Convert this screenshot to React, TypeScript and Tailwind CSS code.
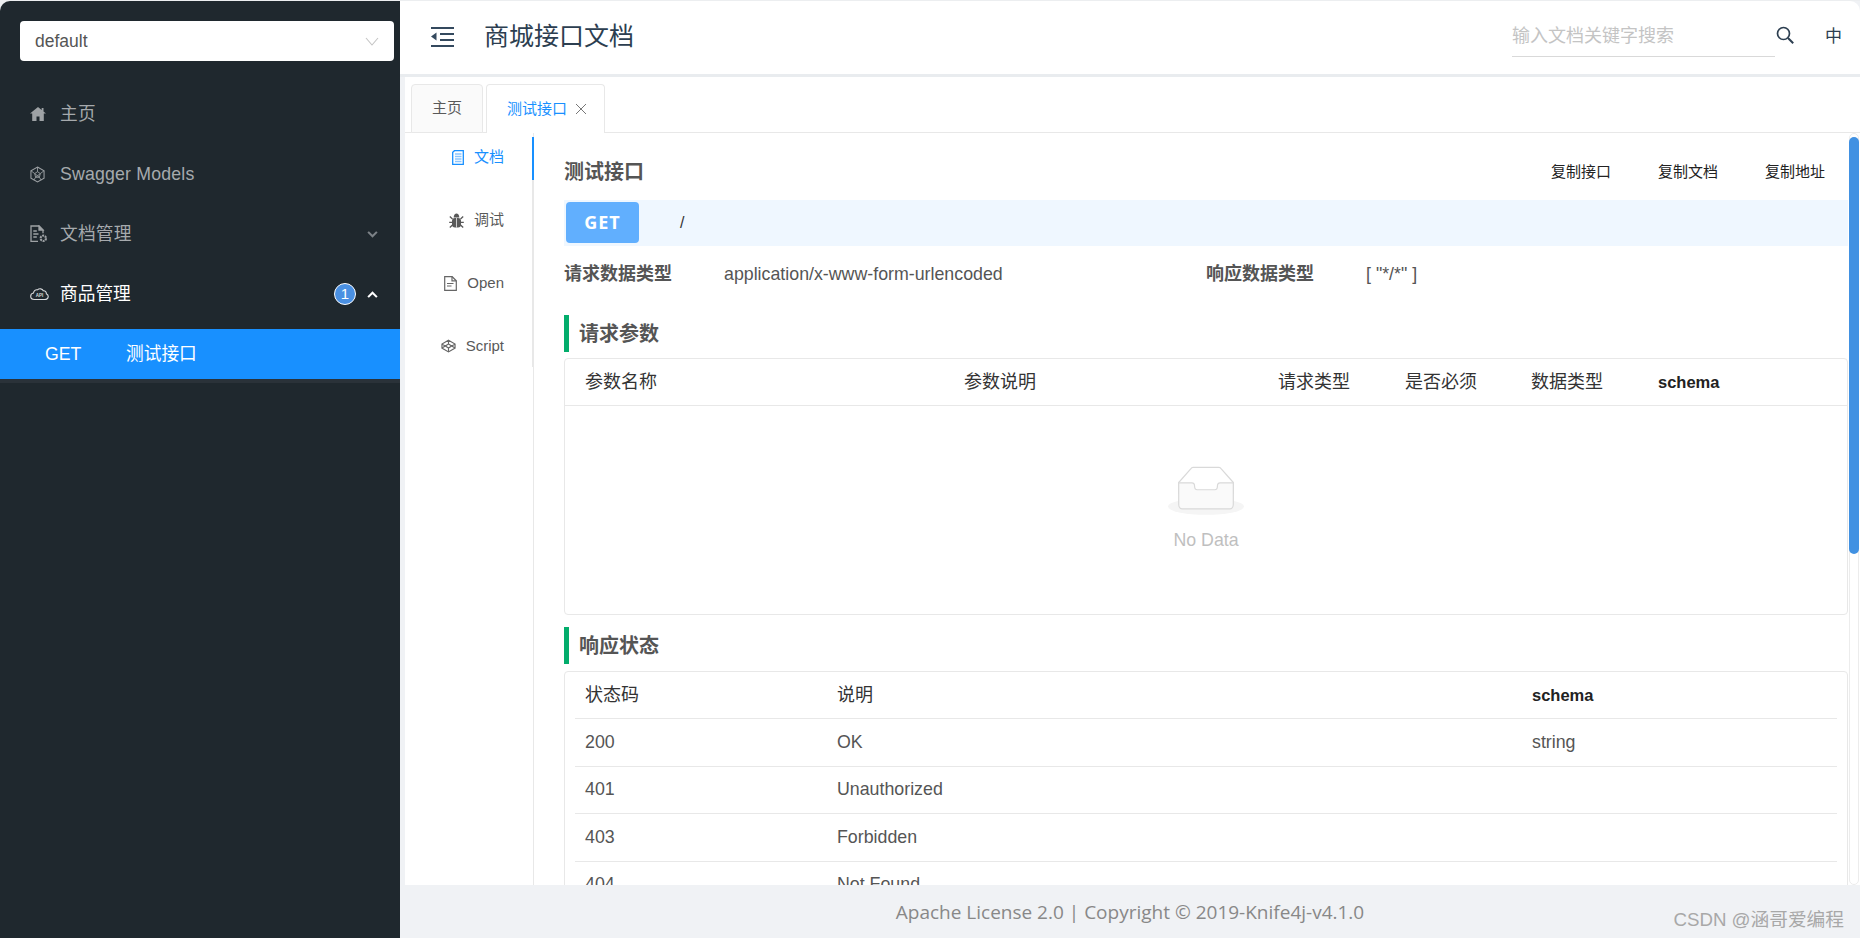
const font = "font-['Liberation_Sans','Noto_Sans_CJK_SC',sans-serif]";

function HomeIcon() {
  return (
    <svg viewBox="0 0 16 14" className="w-[16px] h-[14px]" fill="#9ea2a5">
      <path d="M8 0 0 6.600h2.200V14h4.300V9.600h3V14h4.300V6.600H16l-2.500-2.100V1h-1.800v2L8 0z" />
    </svg>
  );
}

function ModelsIcon() {
  return (
    <svg viewBox="0 0 16 18" className="w-[15px] h-[17px]" fill="none" stroke="#9ea2a5" strokeWidth="1.100">
      <path d="M8 1 15 5v8l-7 4-7-4V5z" />
      <path d="M8 1v5M1 5l4 3M15 5l-4 3M5 8l3-2 3 2-1 4H6zM6 12l-2 3M10 12l2 3M5 8l5 4M11 8l-5 4" strokeWidth="0.900" />
    </svg>
  );
}

function FileGearIcon() {
  return (
    <svg viewBox="0 0 18 18" className="w-[18px] h-[18px]" fill="none" stroke="#9ea2a5" strokeWidth="1.300">
      <path d="M8 16.400H1V1h8l4 4v3.200" />
      <path d="M9 1v4h4z" fill="#9ea2a5" />
      <path d="M3.300 6h3.500M3.300 9h5.200M3.300 12h3.500" />
      <circle cx="13.300" cy="13.300" r="2.700" strokeWidth="2.100" strokeDasharray="2 0.800" />
    </svg>
  );
}

function CloudIcon() {
  return (
    <svg viewBox="0 0 19 13" className="w-[19px] h-[13px]" fill="none" stroke="#d8dadc" strokeWidth="1.100">
      <path d="M4.500 11.500C2 11.500.7 10 .7 8.200c0-1.700 1.200-3 2.800-3.200C3.800 2.800 5.500 1.400 7.500 1.800 9.300.2 12.300.5 13.300 2.800c1.900-.3 3.300 1.200 3 3 1.300.6 2 1.700 1.900 2.800-.1 1.700-1.500 2.900-3.700 2.900z" />
      <text x="9.500" y="9.400" textAnchor="middle" fontSize="4.500" fontWeight="700" fill="#d8dadc" stroke="none">API</text>
    </svg>
  );
}

function SearchIcon() {
  return (
    <svg viewBox="0 0 18 18" className="w-[18px] h-[18px]" fill="none" stroke="#2c3e50" strokeWidth="1.700">
      <circle cx="7.500" cy="7.500" r="6" />
      <path d="m12 12 5.200 5.200" strokeWidth="2" />
    </svg>
  );
}

function Toggler() {
  return (
    <svg viewBox="0 0 23 20" className="w-[23px] h-[20px]" fill="#34495e">
      <rect x="0" y="0" width="23" height="2" />
      <rect x="9" y="6" width="14" height="2" />
      <rect x="9" y="12" width="14" height="2" />
      <rect x="0" y="18" width="23" height="2" />
      <path d="M0 9.500 5.500 5.500v8z" />
    </svg>
  );
}

function DocIcon() {
  return (
    <svg viewBox="0 0 12 15" className="w-[12px] h-[15px]" fill="none" stroke="#1890ff" strokeWidth="1.300">
      <path d="M2.500.7h8.800v13.600H.7V2.400z" />
      <path d="M3 4h6.500M3 6.500h6.500M3 9h6.500M3 11.500h6.500" stroke="#8cc6ff" strokeWidth="1.300" />
    </svg>
  );
}

function BugIcon() {
  return (
    <svg viewBox="0 0 15 15" className="w-[15px] h-[15px]" fill="#595959" stroke="#595959">
      <path d="M4.700 4.500c0-5.200 5.600-5.200 5.600 0z" stroke="none" />
      <rect x="3" y="5" width="9" height="9.500" rx="3" stroke="none" />
      <path d="M.8 3.500 3.500 6M14.200 3.500 11.500 6M.2 9.300h3M14.800 9.300h-3M.8 14.500 4 11.500M14.200 14.500 11 11.500" strokeWidth="1.300" fill="none" />
      <path d="M7.500 5v9.500" stroke="#fff" strokeWidth="0.700" />
    </svg>
  );
}

function FileIcon() {
  return (
    <svg viewBox="0 0 13 15" className="w-[13px] h-[15px]" fill="none" stroke="#666" strokeWidth="1.200">
      <path d="M.7.700h7.500l4.100 4v9.600H.7z" />
      <path d="M8 .700v4.200h4.200" />
      <path d="M3 7.500h6.500M3 10h4.500" strokeWidth="1.100" />
    </svg>
  );
}

function CodepenIcon() {
  return (
    <svg viewBox="0 0 16 14" className="w-[15px] h-[14px]" fill="none" stroke="#666" strokeWidth="1.200">
      <path d="M8 .8 15 5v4.200L8 13.300 1 9.200V5zM8 .8v4l-3.400 2.200L1 5M8 .8v4l3.400 2.200L15 5M1 9.200 4.600 7 8 9.200l3.400-2.200L15 9.200M8 9.200v4.100" />
    </svg>
  );
}

function EmptyIcon() {
  return (
    <svg viewBox="0 0 64 41" className="w-[76px] h-[49px]">
      <g transform="translate(0 1)" fill="none" fillRule="evenodd">
        <ellipse fill="#f5f5f5" cx="32" cy="33" rx="32" ry="7" />
        <g fillRule="nonzero" stroke="#d9d9d9">
          <path d="M55 12.760 44.854 1.258C44.367.474 43.656 0 42.907 0H21.093c-.749 0-1.460.474-1.947 1.257L9 12.761V22h46v-9.240z" />
          <path d="M41.613 15.931c0-1.605.994-2.930 2.227-2.931H55v18.137C55 33.260 53.680 35 52.050 35h-40.100C10.320 35 9 33.259 9 31.137V13h11.160c1.233 0 2.227 1.323 2.227 2.928v.022c0 1.605 1.005 2.901 2.237 2.901h14.752c1.232 0 2.237-1.308 2.237-2.913v-.007z" fill="#fafafa" />
        </g>
      </g>
    </svg>
  );
}

const menus = [
  { label: "主页", icon: <HomeIcon /> },
  { label: "Swagger Models", icon: <ModelsIcon /> },
  { label: "文档管理", icon: <FileGearIcon />, chevron: "down" },
];

const sideTabs = [
  { label: "文档", icon: <DocIcon />, active: true },
  { label: "调试", icon: <BugIcon /> },
  { label: "Open", icon: <FileIcon /> },
  { label: "Script", icon: <CodepenIcon /> },
];

const statusRows = [
  { code: "200", desc: "OK", schema: "string" },
  { code: "401", desc: "Unauthorized", schema: "" },
  { code: "403", desc: "Forbidden", schema: "" },
  { code: "404", desc: "Not Found", schema: "" },
];

function Sidebar() {
  return (
    <aside className="w-[400px] shrink-0 bg-[#1f282e] rounded-tl-[10px] pt-[20px]">
      <div className="mx-[20px] w-[374px] h-[40px] bg-white rounded-[4px] flex items-center justify-between pl-[15px] pr-[15px] text-[#555] text-[17.500px]">
        <span>default</span>
        <svg viewBox="0 0 14 9" className="w-[14px] h-[9px]" fill="none" stroke="#c4c4c4" strokeWidth="1.100">
          <path d="m1 1 6 7 6-7" />
        </svg>
      </div>
      <nav className="mt-[23px]">
        {menus.map((m) => (
          <div key={m.label} className="h-[60px] flex items-center pl-[30px] pr-[22px] text-[#a6aaad] text-[17.700px]">
            <span className="w-[30px] flex">{m.icon}</span>
            <span className="flex-1 tracking-[0.200px]">{m.label}</span>
            {m.chevron && (
              <svg viewBox="0 0 12 8" className="w-[11px] h-[7px]" fill="none" stroke="#7c8287" strokeWidth="2.400">
                <path d="m1 1 5 5 5-5" />
              </svg>
            )}
          </div>
        ))}
        <div className="h-[60px] flex items-center pl-[30px] pr-[22px] text-white text-[17.700px]">
          <span className="w-[30px] flex"><CloudIcon /></span>
          <span className="flex-1">商品管理</span>
          <span className="w-[22px] h-[22px] rounded-full bg-[#4a90e2] border border-white flex items-center justify-center text-[15px] font-light text-white mr-[11px]">1</span>
          <svg viewBox="0 0 12 8" className="w-[11px] h-[7px]" fill="none" stroke="#fff" strokeWidth="2.400">
            <path d="m1 7 5-5 5 5" />
          </svg>
        </div>
      </nav>
      <div className="border-b-[4px] border-[#2a3239]">
        <div className="h-[50px] mt-[5px] bg-[#1890ff] text-white flex items-center pl-[45px] text-[17.700px]">
          <span className="w-[81px]">GET</span>
          <span>测试接口</span>
        </div>
      </div>
    </aside>
  );
}

function Header() {
  return (
    <header className="h-[76px] shrink-0 bg-white border-b-[3px] border-[#e9ecef] rounded-tr-[10px] flex items-center pl-[31px] pr-[18px] pb-[1px]">
      <Toggler />
      <h1 className="ml-[30px] text-[25px] text-[#2c3e50]">商城接口文档</h1>
      <div className="ml-auto w-[263px] h-[40px] border-b border-[#d9d9d9] flex items-center text-[18px] text-[#c4c4c4]">输入文档关键字搜索</div>
      <span className="ml-[1px] mb-[4px] flex"><SearchIcon /></span>
      <span className="ml-[31px] text-[17px] text-[#2c3e50]">中</span>
    </header>
  );
}

function TabBar() {
  return (
    <div className="h-[56px] shrink-0 bg-white pt-[7px] pl-[6px] flex gap-[3px] border-b border-[#e8e8e8]">
      <div className="w-[72px] h-[49px] bg-[#fafafa] border border-[#e8e8e8] rounded-t-[4px] flex items-center justify-center text-[15px] text-[#595959]">主页</div>
      <div className="w-[119px] h-[49px] bg-white border border-b-0 border-[#e8e8e8] rounded-t-[4px] flex items-center pl-[20px] text-[15px] text-[#1890ff] -mb-px">
        测试接口
        <svg viewBox="0 0 12 12" className="w-[12px] h-[12px] ml-[8px]" fill="none" stroke="#777" strokeWidth="1">
          <path d="m1 1 10 10M11 1 1 11" />
        </svg>
      </div>
    </div>
  );
}

function SideTabs() {
  return (
    <div className="w-[129px] shrink-0 border-r border-[#e8e8e8]">
      <div className="h-[230px] mt-[4px] border-r-2 border-[#e8e8e8] -mr-px flex flex-col gap-[20px]">
        {sideTabs.map((t) => (
          <div
            key={t.label}
            className={`h-[43px] shrink-0 -mr-[2px] border-r-2 pb-[3px] flex items-center justify-end gap-[10px] pr-[28px] text-[15px] ${t.active ? "text-[#1890ff] border-[#1890ff]" : "text-[#595959] border-transparent"}`}
          >
            {t.icon}
            <span>{t.label}</span>
          </div>
        ))}
      </div>
    </div>
  );
}

function SectionTitle({ children }: { children: string }) {
  return (
    <div className="h-[37px] border-l-[5px] border-[#03ad6c] pl-[10px] flex items-center text-[20px] font-bold text-[#555]">
      {children}
    </div>
  );
}

function Doc() {
  return (
    <div className="flex-1 min-w-0 pl-[30px] pt-[19px] overflow-hidden">
      <div className="h-[40px] flex items-center justify-between pr-[23px]">
        <span className="text-[20px] font-bold text-[#555]">测试接口</span>
        <div className="flex gap-[47px] text-[15px] text-[#222]">
          <span>复制接口</span>
          <span>复制文档</span>
          <span>复制地址</span>
        </div>
      </div>
      <div className="mt-[8px] h-[46px] bg-[#eff7ff] flex items-center pl-[2px]">
        <span className="w-[73px] h-[41px] mb-[1px] bg-[#61affe] rounded-[4px] flex items-center justify-center text-[18px] font-bold tracking-[1px] text-white font-['Open_Sans',sans-serif]">GET</span>
        <span className="ml-[41px] text-[16px] text-[#333]">/</span>
      </div>
      <div className="mt-[14px] h-[28px] flex items-center text-[17.800px] text-[#555]">
        <span className="w-[160px] text-[18px] font-bold">请求数据类型</span>
        <span className="w-[482px]">application/x-www-form-urlencoded</span>
        <span className="w-[160px] text-[18px] font-bold">响应数据类型</span>
        <span>[ "*/*" ]</span>
      </div>
      <div className="mt-[27px]">
        <SectionTitle>请求参数</SectionTitle>
      </div>
      <div className="mt-[6px] h-[257px] border border-[#e8e8e8] rounded-[4px] flex flex-col">
        <div className="h-[47px] shrink-0 border-b border-[#e8e8e8] flex items-center text-[18px] text-[#333]">
          <span className="w-[399px] pl-[20px]">参数名称</span>
          <span className="w-[314px]">参数说明</span>
          <span className="w-[127px]">请求类型</span>
          <span className="w-[126px]">是否必须</span>
          <span className="w-[127px]">数据类型</span>
          <span className="font-bold text-[16.500px] text-[#222]">schema</span>
        </div>
        <div className="flex-1 flex flex-col items-center pt-[60px]">
          <EmptyIcon />
          <span className="mt-[12px] text-[17.800px] text-[#bfbfbf]">No Data</span>
        </div>
      </div>
      <div className="mt-[12px]">
        <SectionTitle>响应状态</SectionTitle>
      </div>
      <div className="mt-[7px] border border-[#e8e8e8] rounded-t-[4px] px-[10px]">
        <div className="h-[47px] border-b border-[#e8e8e8] flex items-center text-[18px] text-[#333]">
          <span className="w-[262px] pl-[10px]">状态码</span>
          <span className="w-[695px]">说明</span>
          <span className="font-bold text-[16.500px] text-[#222]">schema</span>
        </div>
        {statusRows.map((r) => (
          <div key={r.code} className="h-[47.500px] border-b border-[#e8e8e8] flex items-center text-[17.800px] text-[#555]">
            <span className="w-[262px] pl-[10px]">{r.code}</span>
            <span className="w-[695px]">{r.desc}</span>
            <span>{r.schema}</span>
          </div>
        ))}
      </div>
    </div>
  );
}

export default function App() {
  return (
    <div className={`w-[1860px] h-[938px] flex overflow-hidden bg-[#eceef0] pt-px ${font}`}>
      <Sidebar />
      <main className="flex-1 min-w-0 flex flex-col bg-[#f0f2f5]">
        <Header />
        <div className="flex-1 min-h-0 flex flex-col pl-[5px]">
          <TabBar />
          <div className="relative flex-1 min-h-0 flex bg-white">
            <SideTabs />
            <div className="flex-1 min-w-0 flex pr-[1px] overflow-hidden">
              <Doc />
              <div className="w-[10px] ml-[1px] shrink-0 border border-[#ececec] rounded-[5px]">
                <div className="-m-px h-[417px] mt-[3px] bg-[#4191e2] rounded-[5px]" />
              </div>
            </div>
          </div>
        </div>
        <footer className="relative h-[53px] shrink-0 bg-[#f0f2f5] flex items-center justify-center text-[19px] text-[#888]">
          <span className="font-['Open_Sans',sans-serif] mt-[2px]">Apache License 2.0 | Copyright © 2019-Knife4j-v4.1.0</span>
          <span className="absolute right-[16px] top-[21px] text-[18.700px] text-[#a8a8a8]">CSDN @涵哥爱编程</span>
        </footer>
      </main>
    </div>
  );
}
